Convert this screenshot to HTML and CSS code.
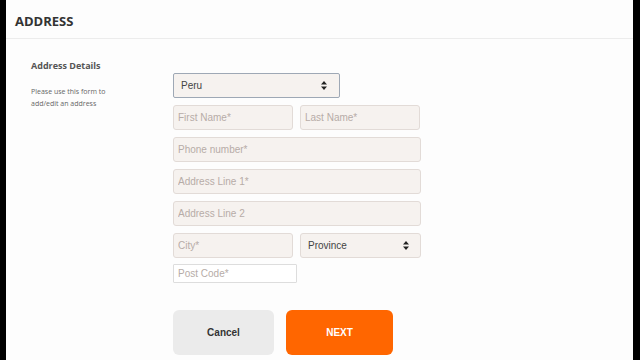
FILE: index.html
```html
<!DOCTYPE html>
<html lang="en">
<head>
    <meta charset="UTF-8">
    <meta name="viewport" content="width=device-width, initial-scale=1.0">
    <title>Address</title>
    <link rel="stylesheet" href="styles.css">
</head>
<body>

<div class="page">
    <header class="page-header">ADDRESS</header>

    <div class="content">
        <div class="intro">
            <h2 class="intro-title">Address Details</h2>
            <p class="intro-text">Please use this form to<br>add/edit an address</p>
        </div>

        <form class="form">
            <div class="select select-country">
                <span>Peru</span>
                <svg class="arrows" width="6" height="9" viewBox="0 0 6 9"><path d="M3 0L6 3.5H0Z M3 9L6 5.5H0Z" fill="#222"/></svg>
            </div>

            <div class="row">
                <input class="field field-half" type="text" placeholder="First Name*">
                <input class="field field-half" type="text" placeholder="Last Name*">
            </div>
            <input class="field" type="text" placeholder="Phone number*">
            <input class="field" type="text" placeholder="Address Line 1*">
            <input class="field" type="text" placeholder="Address Line 2">
            <div class="row">
                <input class="field field-half" type="text" placeholder="City*">
                <div class="select select-province">
                    <span>Province</span>
                    <svg class="arrows" width="6" height="9" viewBox="0 0 6 9"><path d="M3 0L6 3.5H0Z M3 9L6 5.5H0Z" fill="#222"/></svg>
                </div>
            </div>
            <input class="field field-post" type="text" placeholder="Post Code*">

            <div class="actions">
                <button type="button" class="button button-cancel">Cancel</button>
                <button type="button" class="button button-next">NEXT</button>
            </div>
        </form>
    </div>
</div>

</body>
</html>
```

FILE: styles.css
```css
/* Cadre général */
body {
    margin: 0;
    background: #000;
    font-family: 'Liberation Sans', Arial, sans-serif;
    height: 360px;
    overflow: hidden;
}

.page {
    margin: 0 7px 0 6px;
    height: 360px;
    background: #fdfdfd;
}

.page-header {
    height: 39px;
    box-sizing: border-box;
    padding: 12px 0 0 9px;
    font-family: 'Open Sans', 'DejaVu Sans', sans-serif;
    font-size: 13px;
    font-weight: bold;
    color: #333;
    border-bottom: 1px solid #ececec;
}

.content {
    display: flex;
    padding-top: 20px;
}

/* Colonne de gauche */
.intro {
    width: 167px;
    padding-left: 25px;
    box-sizing: border-box;
}

.intro-title {
    margin: 0;
    font-family: 'Open Sans', 'DejaVu Sans', sans-serif;
    font-size: 9px;
    font-weight: bold;
    color: #555;
}

.intro-text {
    margin: 14px 0 0;
    font-family: 'Open Sans', 'DejaVu Sans', sans-serif;
    font-size: 7px;
    line-height: 12px;
    color: #666;
}

/* Formulaire */
.form {
    margin-top: 14px;
    width: 248px;
    display: flex;
    flex-direction: column;
    gap: 7px;
}

.row {
    display: flex;
    gap: 7px;
}

.field {
    height: 25px;
    box-sizing: border-box;
    width: 248px;
    padding: 0 4px;
    font-family: 'Liberation Sans', Arial, sans-serif;
    font-size: 10px;
    background: #f6f2ef;
    border: 1px solid #e2dbd7;
    border-radius: 3px;
    outline: none;
}

.field::placeholder {
    color: #b6aca7;
}

.field-half {
    width: 120px;
}

.field-post {
    width: 124px;
    height: 19px;
    margin-top: -1px;
    background: #fff;
    border-color: #ddd;
    border-radius: 1px;
}

.select {
    height: 25px;
    box-sizing: border-box;
    display: flex;
    align-items: center;
    justify-content: space-between;
    font-size: 10px;
    color: #444;
    background: #f6f2ef;
    border: 1px solid #e2dbd7;
    border-radius: 3px;
}

.select-country {
    width: 167px;
    padding: 0 12px 0 7px;
    border: 1px solid #9ea8b5;
    border-radius: 2px;
}

.select-province {
    width: 121px;
    padding: 0 11px 0 7px;
}

/* Boutons */
.actions {
    display: flex;
    gap: 12px;
    margin-top: 20px;
}

.button {
    height: 45px;
    border: none;
    border-radius: 6px;
    font-family: 'Liberation Sans', Arial, sans-serif;
    font-size: 10px;
    font-weight: bold;
    cursor: pointer;
}

.button-cancel {
    width: 101px;
    background: #ebebeb;
    color: #333;
}

.button-next {
    width: 107px;
    background: #ff6600;
    color: #fff;
}
```
